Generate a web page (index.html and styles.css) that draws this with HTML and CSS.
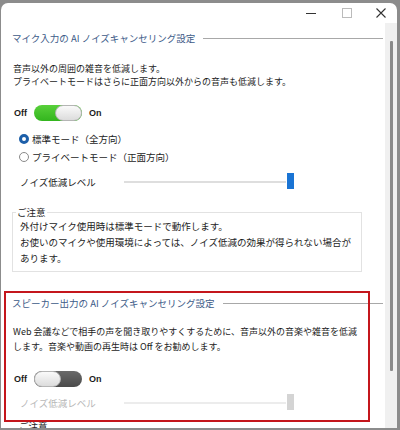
FILE: index.html
```html
<!DOCTYPE html>
<html lang="ja">
<head>
<meta charset="utf-8">
<link rel="stylesheet" href="styles.css">
</head>
<body>
<div class="window">
  <div class="titlebar">
    <span class="ctl min"><svg width="12" height="12" viewBox="0 0 12 12"><path d="M1 6.5h10" stroke="#333" stroke-width="1"/></svg></span>
    <span class="ctl max"><svg width="12" height="12" viewBox="0 0 12 12"><rect x="1.5" y="1.5" width="9" height="9" fill="none" stroke="#bbb" stroke-width="1"/></svg></span>
    <span class="ctl close"><svg width="12" height="12" viewBox="0 0 12 12"><path d="M1.5 1.5l9 9M10.5 1.5l-9 9" stroke="#333" stroke-width="1.1"/></svg></span>
  </div>
  <div class="body">
    <div class="content">
      <div class="section-title"><span>マイク入力の AI ノイズキャンセリング設定</span><i class="rule"></i></div>
      <p class="desc">音声以外の周囲の雑音を低減します。<br>プライベートモードはさらに正面方向以外からの音声も低減します。</p>
      <div class="toggle-row">
        <span class="lbl">Off</span>
        <span class="switch on"><span class="knob"></span></span>
        <span class="lbl">On</span>
      </div>
      <div class="radio-row"><span class="radio checked"></span>標準モード（全方向）</div>
      <div class="radio-row"><span class="radio"></span>プライベートモード（正面方向）</div>
      <div class="slider-row">
        <span class="slider-label">ノイズ低減レベル</span>
        <span class="track"><span class="thumb"></span></span>
      </div>
      <fieldset class="note">
        <legend>ご注意</legend>
        外付けマイク使用時は標準モードで動作します。<br>
        お使いのマイクや使用環境によっては、ノイズ低減の効果が得られない場合があります。
      </fieldset>
      <div class="section-title s2"><span>スピーカー出力の AI ノイズキャンセリング設定</span><i class="rule"></i></div>
      <p class="desc d2">Web 会議などで相手の声を聞き取りやすくするために、音声以外の音楽や雑音を低減します。音楽や動画の再生時は Off をお勧めします。</p>
      <div class="toggle-row t2">
        <span class="lbl">Off</span>
        <span class="switch off"><span class="knob"></span></span>
        <span class="lbl">On</span>
      </div>
      <div class="slider-row disabled">
        <span class="slider-label">ノイズ低減レベル</span>
        <span class="track"><span class="thumb"></span></span>
      </div>
      <div class="cut">ご注意</div>
      <div class="highlight"></div>
    </div>
    <div class="scrollbar"><div class="sthumb"></div></div>
  </div>
</div>
</body>
</html>
```
FILE: styles.css
```css
html, body {
  margin: 0;
  padding: 0;
  width: 400px;
  height: 430px;
  overflow: hidden;
  background: #8c8c8c;
}
.window {
  margin: 3px 3px 0 1px;
  height: 425px;
  background: #fff;
  border-radius: 7px 7px 0 0;
  display: flex;
  flex-direction: column;
  overflow: hidden;
  font-family: "Noto Sans CJK JP", "Noto Sans", sans-serif;
  color: #1c1c1c;
}
.titlebar {
  height: 20px;
  display: flex;
  justify-content: flex-end;
  align-items: center;
  flex-shrink: 0;
}
.ctl {
  width: 36px;
  display: flex;
  justify-content: center;
  align-items: center;
  height: 16px;
}
.ctl.close { width: 32px; }
.body {
  flex: 1;
  display: flex;
  min-height: 0;
}
.content {
  flex: 1;
  position: relative;
  padding: 8px 0 0 11px;
  font-size: 9px;
  line-height: 12px;
}
.scrollbar {
  width: 12px;
  background: #f0f0f0;
  display: flex;
  justify-content: center;
  padding-top: 18px;
}
.sthumb {
  width: 3px;
  height: 330px;
  background: #8a8a8a;
  border-radius: 1px;
}
.section-title {
  display: flex;
  align-items: center;
  color: #3d5b88;
  font-size: 9.5px;
  height: 14px;
  margin-right: 2px;
}
.rule {
  flex: 1;
  height: 1px;
  background: #a8a8a8;
  margin-left: 8px;
}
.desc {
  margin: 18px 0 0 1px;
  line-height: 12.5px;
}
.toggle-row {
  display: flex;
  align-items: center;
  margin-top: 16px;
  height: 18px;
  padding-left: 2px;
  font-family: "Liberation Sans", Arial, sans-serif;
  font-weight: bold;
  font-size: 9px;
}
.switch {
  width: 48px;
  height: 16px;
  border-radius: 8px;
  margin: 0 7px 0 7px;
  position: relative;
  box-sizing: border-box;
  display: block;
}
.switch.on {
  background: linear-gradient(#58d03a, #33b51e);
}
.switch.off {
  background: linear-gradient(#6a6a6a, #4a4a4a);
}
.knob {
  position: absolute;
  top: 0;
  width: 27px;
  height: 16px;
  border-radius: 8px;
  background: linear-gradient(#fafafa, #dcdcdc);
  border: 1px solid #b5b5b5;
  box-sizing: border-box;
}
.on .knob { right: 0; }
.off .knob { left: 0; }
.radio-row {
  display: flex;
  align-items: center;
  height: 18px;
  margin-left: 7px;
  font-size: 9.5px;
}
.toggle-row + .radio-row { margin-top: 8px; }
.radio {
  width: 10px;
  height: 10px;
  border-radius: 50%;
  box-sizing: border-box;
  border: 1px solid #8a8a8a;
  margin-right: 3px;
  background: #fff;
}
.radio.checked {
  border: 3px solid #1d5fa9;
}
.slider-row {
  display: flex;
  align-items: center;
  height: 18px;
  margin-top: 7px;
  margin-left: 8px;
  font-size: 9.5px;
}
.slider-label {
  width: 104px;
}
.track {
  width: 162px;
  height: 2px;
  background: #dedede;
  position: relative;
  display: block;
}
.thumb {
  position: absolute;
  right: -8px;
  top: -8px;
  width: 7px;
  height: 16px;
  background: #1a74d4;
}
.disabled .slider-label { color: #b8b8b8; }
.disabled .track { background: #ececec; }
.disabled .thumb { background: #d4d4d4; }
fieldset.note {
  margin: 16px 23px 0 0;
  padding: 1px 8px 5px 7px;
  border: 1px solid #e2e2e2;
  line-height: 16px;
  font-size: 9.5px;
}
fieldset.note legend {
  padding: 0 1px;
  margin-left: -4px;
  font-size: 9.5px;
  line-height: 10px;
}
.s2 { margin-top: 24px; }
.d2 { margin-top: 14px; line-height: 15px; margin-right: 22px; }
.t2 { margin-top: 16px; }
.slider-row.disabled { margin-top: 6px; }
.cut {
  margin-top: 8px;
  margin-left: 7px;
  font-size: 9.5px;
}
.highlight {
  position: absolute;
  left: 3px;
  top: 268px;
  width: 366px;
  height: 131px;
  border: 2px solid #c4161c;
  box-sizing: border-box;
}
```
